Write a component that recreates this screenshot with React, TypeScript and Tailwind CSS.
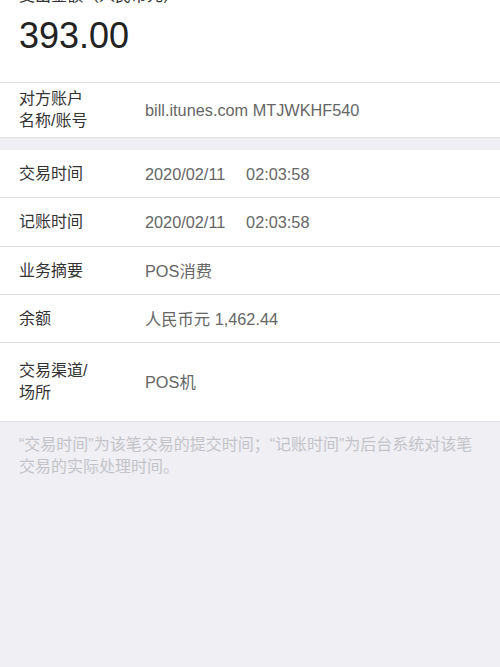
import React from 'react';

interface DetailRow {
  label: string[];
  value: string;
  height: string;
}

const rows: DetailRow[] = [
  { label: ['交易时间'], value: '2020/02/11\u2003 02:03:58', height: 'h-[48px]' },
  { label: ['记账时间'], value: '2020/02/11\u2003 02:03:58', height: 'h-[49px]' },
  { label: ['业务摘要'], value: 'POS消费', height: 'h-[48px]' },
  { label: ['余额'], value: '人民币元 1,462.44', height: 'h-[48px]' },
  { label: ['交易渠道/', '场所'], value: 'POS机', height: 'h-[79px]' },
];

const Row: React.FC<DetailRow> = ({ label, value, height }) => (
  <div className={`flex items-center border-b border-[#e2e2e4] bg-white ${height}`}>
    <div className="w-[145px] shrink-0 pl-[19px] text-[16px] leading-[22px] text-[#333333]">
      {label.map((l) => (
        <div key={l}>{l}</div>
      ))}
    </div>
    <div className="text-[16.3px] leading-[22px] text-[#666666]">{value}</div>
  </div>
);

const App: React.FC = () => {
  return (
    <div
      className="min-h-[667px] w-[500px] bg-[#efeff4]"
      style={{ fontFamily: '"Liberation Sans", "Noto Sans CJK SC", sans-serif' }}
    >
      {/* amount header, title scrolled partly out of view */}
      <section className="h-[83px] overflow-hidden border-b border-[#e2e2e4] bg-white pl-[19px]">
        <div className="-mt-[15px] text-[16px] leading-[22px] text-[#333333]">支出金额（人民币元）</div>
        <div className="mt-[9px] text-[36px] leading-[40px] text-[#222222]">393.00</div>
      </section>

      <div className="flex h-[55px] items-center border-b border-[#e2e2e4] bg-white">
        <div className="w-[145px] shrink-0 pl-[19px] text-[16px] leading-[22px] text-[#333333]">
          <div>对方账户</div>
          <div>名称/账号</div>
        </div>
        <div className="text-[16.3px] leading-[22px] text-[#666666]">bill.itunes.com MTJWKHF540</div>
      </div>

      <div className="h-[12px]" />

      <section>
        {rows.map((r) => (
          <Row key={r.label.join('')} {...r} />
        ))}
      </section>

      <p className="px-[19px] pt-[12px] text-[16px] leading-[22px] text-[#c4c4c8]">
        “交易时间”为该笔交易的提交时间；“记账时间”为后台系统对该笔交易的实际处理时间。
      </p>
    </div>
  );
};

export default App;
